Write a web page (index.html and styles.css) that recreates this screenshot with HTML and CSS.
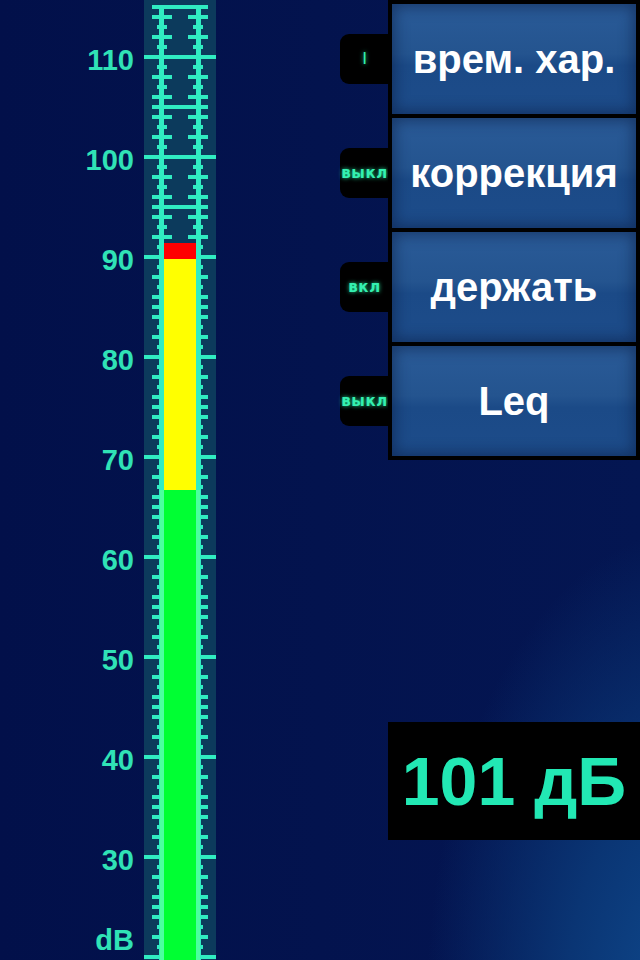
FILE: index.html
```html
<!DOCTYPE html>
<html lang="ru">
<head>
<meta charset="utf-8">
<title>Шумомер</title>
<link rel="stylesheet" href="styles.css">
</head>
<body>
<div class="screen">
  <div class="scale">
    <span class="lbl">110</span>
    <span class="lbl">100</span>
    <span class="lbl">90</span>
    <span class="lbl">80</span>
    <span class="lbl">70</span>
    <span class="lbl">60</span>
    <span class="lbl">50</span>
    <span class="lbl">40</span>
    <span class="lbl">30</span>
    <span class="lbl lbl-db">dB</span>
  </div>
  <div class="meter">
    <svg class="meter-svg" width="72" height="960" viewBox="0 0 72 960">
      <defs>
        <pattern id="ticks" x="0" y="2" width="72" height="100" patternUnits="userSpaceOnUse">
          <g fill="#30ecc2">
            <rect x="8" y="3" width="56" height="4"/>
            <rect x="8" y="13" width="20" height="4"/><rect x="44" y="13" width="20" height="4"/>
            <rect x="13" y="23" width="10" height="4"/><rect x="49" y="23" width="10" height="4"/>
            <rect x="8" y="33" width="20" height="4"/><rect x="44" y="33" width="20" height="4"/>
            <rect x="13" y="43" width="10" height="4"/><rect x="49" y="43" width="10" height="4"/>
            <rect x="0" y="53" width="72" height="4"/>
            <rect x="13" y="63" width="10" height="4"/><rect x="49" y="63" width="10" height="4"/>
            <rect x="8" y="73" width="20" height="4"/><rect x="44" y="73" width="20" height="4"/>
            <rect x="13" y="83" width="10" height="4"/><rect x="49" y="83" width="10" height="4"/>
            <rect x="8" y="93" width="20" height="4"/><rect x="44" y="93" width="20" height="4"/>
          </g>
        </pattern>
      </defs>
      <rect x="0" y="0" width="72" height="960" fill="#0c3a5c"/>
      <rect x="0" y="0" width="72" height="960" fill="url(#ticks)"/>
      <rect x="15" y="5" width="5" height="955" fill="#30ecc2"/>
      <rect x="52" y="5" width="5" height="955" fill="#30ecc2"/>
      <rect x="20" y="243" width="32" height="16" fill="#ff0000"/>
      <rect x="20" y="259" width="32" height="231" fill="#ffff00"/>
      <rect x="16" y="490" width="40" height="470" fill="#00ff33"/>
      <rect x="16" y="490" width="4" height="470" fill="#4cffa0"/>
      <rect x="52" y="490" width="4" height="470" fill="#4cffa0"/>
    </svg>
  </div>
  <div class="side">
    <div class="controls">
      <div class="leds">
        <div class="slot"><span class="led led-i">I</span></div>
        <div class="slot"><span class="led">выкл</span></div>
        <div class="slot"><span class="led">вкл</span></div>
        <div class="slot"><span class="led">выкл</span></div>
      </div>
      <div class="buttons">
        <div class="btn">врем. хар.</div>
        <div class="btn">коррекция</div>
        <div class="btn">держать</div>
        <div class="btn">Leq</div>
      </div>
    </div>
    <div class="readout">101 дБ</div>
  </div>
</div>
</body>
</html>
```
FILE: styles.css
```css
html, body {
  margin: 0;
  padding: 0;
}

body {
  width: 640px;
  height: 960px;
  overflow: hidden;
  background-color: #03124a;
  background-image:
    radial-gradient(ellipse 55% 65% at 108% 104%, #0f4a8e 0%, #0a3574 35%, rgba(4, 22, 84, 0) 75%),
    linear-gradient(90deg, #02104a 0%, #041652 100%);
  font-family: "Liberation Sans", Arial, sans-serif;
}

.screen {
  display: flex;
  width: 640px;
  height: 960px;
}

.scale {
  width: 136px;
  flex-shrink: 0;
  box-sizing: border-box;
  padding: 10px 2px 0 0;
  display: flex;
  flex-direction: column;
}

.lbl {
  display: block;
  flex-shrink: 0;
  height: 100px;
  line-height: 100px;
  text-align: right;
  font-size: 29px;
  font-weight: bold;
  color: #30e2b6;
}

.lbl-db {
  height: 40px;
  line-height: 40px;
  margin-top: 10px;
}

.meter {
  width: 72px;
  height: 960px;
  margin-left: 8px;
  flex-shrink: 0;
}

.meter-svg {
  display: block;
}

.side {
  margin-left: 124px;
  display: flex;
  flex-direction: column;
}

.controls {
  display: flex;
}

.leds {
  width: 48px;
  padding-top: 4px;
  display: flex;
  flex-direction: column;
  gap: 4px;
}

.slot {
  height: 110px;
  display: flex;
  align-items: center;
}

.led {
  width: 48px;
  height: 50px;
  box-sizing: border-box;
  padding-left: 1px;
  background: #000;
  border-radius: 9px 0 0 9px;
  display: flex;
  align-items: center;
  justify-content: center;
  font-family: "DejaVu Sans", sans-serif;
  font-weight: bold;
  font-size: 15px;
  letter-spacing: 0.6px;
  color: #34f0b0;
  text-shadow: 0 0 4px rgba(40, 235, 165, 0.9);
}

.led-i {
  font-family: "Liberation Sans", Arial, sans-serif;
  font-weight: normal;
  font-size: 17px;
  letter-spacing: 0;
}

.buttons {
  width: 252px;
  box-sizing: border-box;
  padding: 4px;
  background: #000;
  display: flex;
  flex-direction: column;
  gap: 4px;
}

.btn {
  height: 110px;
  display: flex;
  align-items: center;
  justify-content: center;
  color: #fff;
  font-size: 40px;
  font-weight: bold;
  background: linear-gradient(180deg, #2a5b98 0%, #24548f 45%, #1b4a87 56%, #1d4c8a 100%);
  box-shadow: inset 0 0 14px 3px rgba(10, 28, 66, 0.55);
}

.readout {
  margin-top: 262px;
  margin-left: 48px;
  width: 252px;
  height: 118px;
  background: #000;
  display: flex;
  align-items: center;
  justify-content: center;
  color: #22e8b4;
  font-size: 68px;
  font-weight: bold;
}
```
